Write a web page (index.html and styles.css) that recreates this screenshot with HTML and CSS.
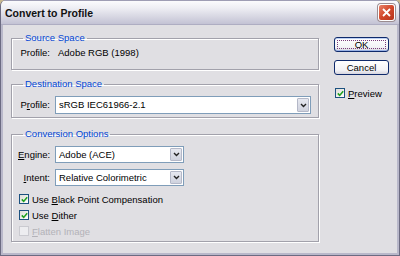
FILE: index.html
```html
<!DOCTYPE html>
<html lang="en">
<head>
    <meta charset="UTF-8">
    <title>Convert to Profile</title>
    <link rel="stylesheet" href="styles.css">
</head>
<body>
    <div class="window">
        <div class="titlebar">
            <span class="title">Convert to Profile</span>
            <span class="close">
                <svg width="9" height="9" viewBox="0 0 9 9"><path d="M1 1 L8 8 M8 1 L1 8" stroke="#fff" stroke-width="1.8" fill="none"/></svg>
            </span>
        </div>

        <div class="content">
            <div class="main">
                <fieldset class="group source">
                    <legend>Source Space</legend>
                    <div class="row">
                        <span class="lbl">Profile:</span>
                        <span class="val">Adobe RGB (1998)</span>
                    </div>
                </fieldset>

                <fieldset class="group dest">
                    <legend>Destination Space</legend>
                    <div class="row">
                        <span class="lbl">P<u>r</u>ofile:</span>
                        <div class="select wide">
                            <span class="sel-text">sRGB IEC61966-2.1</span>
                            <span class="arrow"><svg width="7" height="5" viewBox="0 0 7 5"><path d="M1 1 L3.5 3.5 L6 1" stroke="#222" stroke-width="1.4" fill="none"/></svg></span>
                        </div>
                    </div>
                </fieldset>

                <fieldset class="group options">
                    <legend>Conversion Options</legend>
                    <div class="row">
                        <span class="lbl"><u>E</u>ngine:</span>
                        <div class="select short">
                            <span class="sel-text">Adobe (ACE)</span>
                            <span class="arrow"><svg width="7" height="5" viewBox="0 0 7 5"><path d="M1 1 L3.5 3.5 L6 1" stroke="#222" stroke-width="1.4" fill="none"/></svg></span>
                        </div>
                    </div>
                    <div class="row">
                        <span class="lbl"><u>I</u>ntent:</span>
                        <div class="select short">
                            <span class="sel-text">Relative Colorimetric</span>
                            <span class="arrow"><svg width="7" height="5" viewBox="0 0 7 5"><path d="M1 1 L3.5 3.5 L6 1" stroke="#222" stroke-width="1.4" fill="none"/></svg></span>
                        </div>
                    </div>
                    <div class="checks">
                        <div class="check on"><span class="box"><svg width="7" height="7" viewBox="0 0 7 7"><path d="M0.8 3.4 L2.7 5.4 L6.2 1.3" stroke="#21a121" stroke-width="1.6" fill="none"/></svg></span><span>Use <u>B</u>lack Point Compensation</span></div>
                        <div class="check on"><span class="box"><svg width="7" height="7" viewBox="0 0 7 7"><path d="M0.8 3.4 L2.7 5.4 L6.2 1.3" stroke="#21a121" stroke-width="1.6" fill="none"/></svg></span><span>Use <u>D</u>ither</span></div>
                        <div class="check off"><span class="box"></span><span><u>F</u>latten Image</span></div>
                    </div>
                </fieldset>
            </div>

            <div class="side">
                <button class="btn default">OK</button>
                <button class="btn">Cancel</button>
                <div class="check on preview"><span class="box"><svg width="7" height="7" viewBox="0 0 7 7"><path d="M0.8 3.4 L2.7 5.4 L6.2 1.3" stroke="#21a121" stroke-width="1.6" fill="none"/></svg></span><span><u>P</u>review</span></div>
            </div>
        </div>
    </div>
</body>
</html>
```

FILE: styles.css
```css
* {
    margin: 0;
    padding: 0;
    box-sizing: border-box;
}

html {
    background: #c8b88f;
}

body {
    width: 400px;
    height: 256px;
    font-family: "Liberation Sans", Arial, sans-serif;
    font-size: 9.5px;
    color: #000;
}

.window {
    width: 400px;
    height: 256px;
    display: flex;
    flex-direction: column;
    background: #b9b8ca;
    border: 1px solid #6c6b82;
    border-top: 0;
    border-radius: 6px 6px 0 0;
    overflow: hidden;
}

.titlebar {
    height: 25px;
    flex: none;
    display: flex;
    align-items: center;
    justify-content: space-between;
    padding: 0 4px 0 4px;
    background: linear-gradient(#fbfbfd, #eeeef4 30%, #dcdce6 60%, #c3c2d4);
    border-top: 1px solid #9e9db4;
    border-bottom: 1px solid #aeadc2;
}

.title {
    font-size: 10.5px;
    font-weight: bold;
    color: #111;
}

.close {
    width: 17px;
    height: 17px;
    display: flex;
    align-items: center;
    justify-content: center;
    border: 1px solid #fff;
    border-radius: 3px;
    background: linear-gradient(135deg, #e8826a, #d2482b 50%, #b5341c);
    box-shadow: 0 0 0 1px #9a8c90;
}

.content {
    flex: 1;
    display: flex;
    margin: 0 2px 2px 2px;
    padding: 7px 8px 0 8px;
    background: #e0dfe3;
}

.main {
    width: 308px;
    display: flex;
    flex-direction: column;
}

.group {
    border: 1px solid #a2a1ab;
    box-shadow: 1px 1px 0 #fff, inset 1px 1px 0 #fff;
    padding: 0 6px;
}

.group legend {
    margin-left: 5px;
    padding: 0 2px;
    line-height: 12px;
    color: #0046d5;
}

.source {
    padding-top: 3px;
    padding-bottom: 10px;
}

.dest {
    margin-top: 8px;
    padding-top: 6px;
    padding-bottom: 3px;
}

.options {
    margin-top: 10px;
    padding-top: 6px;
    padding-bottom: 2px;
}

.row {
    display: flex;
    align-items: center;
    line-height: 12px;
}

.options .row + .row {
    margin-top: 6px;
}

.lbl {
    width: 32px;
    text-align: right;
    margin-right: 5px;
}

.val {
    padding-left: 3px;
}

.select {
    display: flex;
    align-items: center;
    justify-content: space-between;
    height: 18px;
    background: #fff;
    border: 1px solid #7f9db9;
    padding: 1px;
}

.select.wide {
    width: 256px;
}

.select.short {
    width: 129px;
    height: 17px;
}

.sel-text {
    padding-left: 2px;
}

.arrow {
    width: 12px;
    height: 100%;
    display: flex;
    align-items: center;
    justify-content: center;
    background: linear-gradient(#e6e8f0, #cfd2de);
    border: 1px solid #b4b8c8;
    border-radius: 1px;
}

.checks {
    margin-top: 5px;
    padding-left: 1px;
}

.check {
    display: flex;
    align-items: center;
    height: 16px;
}

.box {
    width: 10px;
    height: 10px;
    margin-right: 3px;
    display: flex;
    align-items: center;
    justify-content: center;
    border: 1px solid #1c5180;
    background: linear-gradient(135deg, #dcdcd6, #fff);
}

.check.off {
    color: #b3b2b8;
}

.check.off .box {
    border-color: #cacad0;
    background: #ededf0;
}

.side {
    margin-left: 15px;
    width: 55px;
    padding-top: 5px;
    display: flex;
    flex-direction: column;
}

.btn {
    width: 55px;
    height: 15px;
    font-family: inherit;
    font-size: 9.5px;
    color: #000;
    border: 1px solid #0f2a6b;
    border-radius: 3px;
    background: linear-gradient(#ffffff, #f3f3f6 70%, #d6d5de);
}

.btn + .btn {
    margin-top: 8px;
}

.btn.default {
    box-shadow: inset 0 1px 0 #bcd0f4, inset 0 -1px 0 #9bb3e6;
    outline: 1px dotted #7a3c7a;
    outline-offset: -4px;
}

.preview {
    margin-top: 10px;
    padding-left: 1px;
}
```
